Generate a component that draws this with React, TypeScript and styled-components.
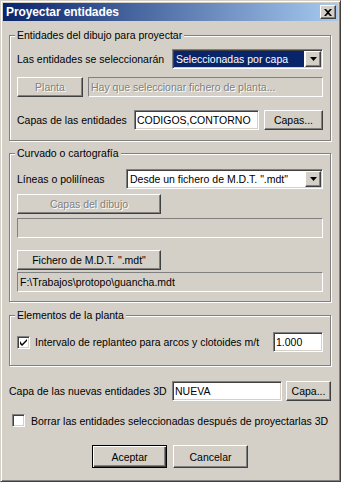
import React from 'react';
import styled, { createGlobalStyle, css } from 'styled-components';

const FONT = '"Liberation Sans", Arial, sans-serif';
const FS = '10.5px';

const Global = createGlobalStyle`
  html, body { margin: 0; padding: 0; background: #D4D0C8; }
  body { font-family: ${FONT}; font-size: ${FS}; color: #000; }
  * { box-sizing: border-box; }
`;

const FACE = '#D4D0C8';

const sunken = css`
  border: 1px solid;
  border-color: #808080 #ffffff #ffffff #808080;
  box-shadow: inset 1px 1px 0 #404040, inset -1px -1px 0 ${FACE};
`;

const raised = css`
  border: 1px solid;
  border-color: #ffffff #404040 #404040 #ffffff;
  box-shadow: inset -1px -1px 0 #808080;
`;

const Window = styled.div`
  width: 341px;
  height: 482px;
  background: ${FACE};
  border: 1px solid;
  border-color: ${FACE} #404040 #404040 ${FACE};
  box-shadow: inset 1px 1px 0 #ffffff, inset -1px -1px 0 #808080;
  padding: 2px;
  display: flex;
  flex-direction: column;
`;

const TitleBar = styled.div`
  height: 18px;
  flex: none;
  display: flex;
  align-items: center;
  justify-content: space-between;
  padding: 0 2px 0 3px;
  background: linear-gradient(to right, #0A246A, #A6CAF0);
`;

const TitleText = styled.span`
  color: #ffffff;
  font-weight: bold;
  font-size: 12px;
  letter-spacing: -0.1px;
`;

const CloseButton = styled.div`
  width: 16px;
  height: 14px;
  background: ${FACE};
  ${raised};
  display: flex;
  align-items: center;
  justify-content: center;
`;

const Content = styled.div`
  display: flex;
  flex-direction: column;
  padding: 0 7px 0 6px;
`;

const Group = styled.div<{ $mt: number; $pt: number; $pb: number }>`
  position: relative;
  margin-top: ${p => p.$mt}px;
  padding: ${p => p.$pt}px 7px ${p => p.$pb}px 7px;
  border: 1px solid #808080;
  box-shadow: 1px 1px 0 #ffffff, inset 1px 1px 0 #ffffff;
  display: flex;
  flex-direction: column;
`;

const Legend = styled.span`
  position: absolute;
  top: -8px;
  left: 5px;
  padding: 0 2px;
  line-height: 14px;
  background: ${FACE};
`;

const Row = styled.div<{ $mt?: number; $h?: number; $gap?: number; $center?: boolean }>`
  display: flex;
  align-items: center;
  justify-content: ${p => (p.$center ? 'center' : 'flex-start')};
  height: ${p => p.$h ?? 20}px;
  margin-top: ${p => p.$mt ?? 0}px;
  gap: ${p => p.$gap ?? 0}px;
`;

const Label = styled.span<{ $ml?: number }>`
  white-space: nowrap;
  margin-left: ${p => p.$ml ?? 0}px;
`;

const Edit = styled.div<{ $w: number; $auto?: boolean }>`
  width: ${p => p.$w}px;
  height: 20px;
  flex: none;
  margin-left: ${p => (p.$auto ? 'auto' : '0')};
  background: #ffffff;
  ${sunken};
  display: flex;
  align-items: center;
  padding: 0 2px 0 2px;
  white-space: nowrap;
  overflow: hidden;
`;

const StaticField = styled.div<{ $disabled?: boolean }>`
  flex: 1;
  height: 20px;
  border: 1px solid;
  border-color: #808080 #ffffff #ffffff #808080;
  background: ${FACE};
  display: flex;
  align-items: center;
  padding: 0 2px;
  white-space: nowrap;
  overflow: hidden;
  color: ${p => (p.$disabled ? '#808080' : '#000')};
  text-shadow: ${p => (p.$disabled ? '1px 1px 0 #fff' : 'none')};
`;

const Button = styled.button<{ $w: number; $h?: number; $default?: boolean }>`
  width: ${p => p.$w}px;
  height: ${p => p.$h ?? 20}px;
  flex: none;
  padding: 0;
  margin: 0;
  font-family: ${FONT};
  font-size: ${FS};
  background: ${FACE};
  color: #000;
  ${p =>
    p.$default
      ? css`
          border: 1px solid #000;
          box-shadow: inset 1px 1px 0 #fff, inset -1px -1px 0 #404040, inset -2px -2px 0 #808080;
        `
      : raised};
  &:disabled {
    color: #808080;
    text-shadow: 1px 1px 0 #fff;
  }
`;

const Combo = styled.div<{ $w: number }>`
  width: ${p => p.$w}px;
  height: 20px;
  flex: none;
  margin-left: auto;
  background: #ffffff;
  ${sunken};
  display: flex;
  align-items: stretch;
  padding: 1px;
`;

const ComboValue = styled.div<{ $selected?: boolean }>`
  flex: 1;
  display: flex;
  align-items: center;
  padding: 0 2px;
  margin-right: 1px;
  white-space: nowrap;
  overflow: hidden;
  background: ${p => (p.$selected ? '#0A246A' : 'transparent')};
  color: ${p => (p.$selected ? '#fff' : '#000')};
`;

const ComboArrow = styled.div`
  width: 16px;
  flex: none;
  background: ${FACE};
  ${raised};
  display: flex;
  align-items: center;
  justify-content: center;
`;

const CheckBox = styled.div<{ $ml?: number }>`
  width: 13px;
  height: 13px;
  flex: none;
  margin-left: ${p => p.$ml ?? 0}px;
  background: #fff;
  ${sunken};
  display: flex;
  align-items: center;
  justify-content: center;
`;

const Arrow = () => (
  <svg width="7" height="4" viewBox="0 0 7 4">
    <path d="M0 0h7L3.5 4z" fill="#000" />
  </svg>
);

const Check = () => (
  <svg width="7" height="7" viewBox="0 0 7 7">
    <path d="M0 2v3l2 2L7 2V-0L2 5z" fill="#000" />
  </svg>
);

const CloseX = () => (
  <svg width="8" height="7" viewBox="0 0 8 7">
    <path d="M0 0h2l2 2 2-2h2L5 3.5 8 7H6L4 5 2 7H0l3-3.5z" fill="#000" />
  </svg>
);

export default function App() {
  return (
    <>
      <Global />
      <Window>
        <TitleBar>
          <TitleText>Proyectar entidades</TitleText>
          <CloseButton>
            <CloseX />
          </CloseButton>
        </TitleBar>
        <Content>
          <Group $mt={14} $pt={13} $pb={10}>
            <Legend>Entidades del dibujo para proyectar</Legend>
            <Row>
              <Label>Las entidades se seleccionarán</Label>
              <Combo $w={151}>
                <ComboValue $selected>Seleccionadas por capa</ComboValue>
                <ComboArrow>
                  <Arrow />
                </ComboArrow>
              </Combo>
            </Row>
            <Row $mt={8} $gap={5}>
              <Button $w={66} disabled>
                Planta
              </Button>
              <StaticField $disabled>Hay que seleccionar fichero de planta...</StaticField>
            </Row>
            <Row $mt={13} $gap={5}>
              <Label>Capas de las entidades</Label>
              <Edit $w={125} $auto>
                CODIGOS,CONTORNO
              </Edit>
              <Button $w={59}>Capas...</Button>
            </Row>
          </Group>

          <Group $mt={12} $pt={15} $pb={9}>
            <Legend>Curvado o cartografía</Legend>
            <Row>
              <Label>Líneas o polilíneas</Label>
              <Combo $w={197}>
                <ComboValue>Desde un fichero de M.D.T. ".mdt"</ComboValue>
                <ComboArrow>
                  <Arrow />
                </ComboArrow>
              </Combo>
            </Row>
            <Row $mt={5}>
              <Button $w={144} disabled>
                Capas del dibujo
              </Button>
            </Row>
            <Row $mt={4}>
              <StaticField $disabled />
            </Row>
            <Row $mt={12}>
              <Button $w={144}>Fichero de M.D.T. ".mdt"</Button>
            </Row>
            <Row $mt={2}>
              <StaticField>F:\Trabajos\protopo\guancha.mdt</StaticField>
            </Row>
          </Group>

          <Group $mt={13} $pt={16} $pb={13}>
            <Legend>Elementos de la planta</Legend>
            <Row>
              <CheckBox>
                <Check />
              </CheckBox>
              <Label $ml={5}>Intervalo de replanteo para arcos y clotoides m/t</Label>
              <Edit $w={50} $auto>
                1.000
              </Edit>
            </Row>
          </Group>

          <Row $mt={15} $gap={4}>
            <Label>Capa de las nuevas entidades 3D</Label>
            <Edit $w={110} $auto>
              NUEVA
            </Edit>
            <Button $w={45}>Capa...</Button>
          </Row>

          <Row $mt={13} $h={13}>
            <CheckBox $ml={3} />
            <Label $ml={6}>Borrar las entidades seleccionadas después de proyectarlas 3D</Label>
          </Row>

          <Row $mt={18} $h={23} $gap={6} $center>
            <Button $w={75} $h={23} $default>
              Aceptar
            </Button>
            <Button $w={75} $h={23}>
              Cancelar
            </Button>
          </Row>
        </Content>
      </Window>
    </>
  );
}
